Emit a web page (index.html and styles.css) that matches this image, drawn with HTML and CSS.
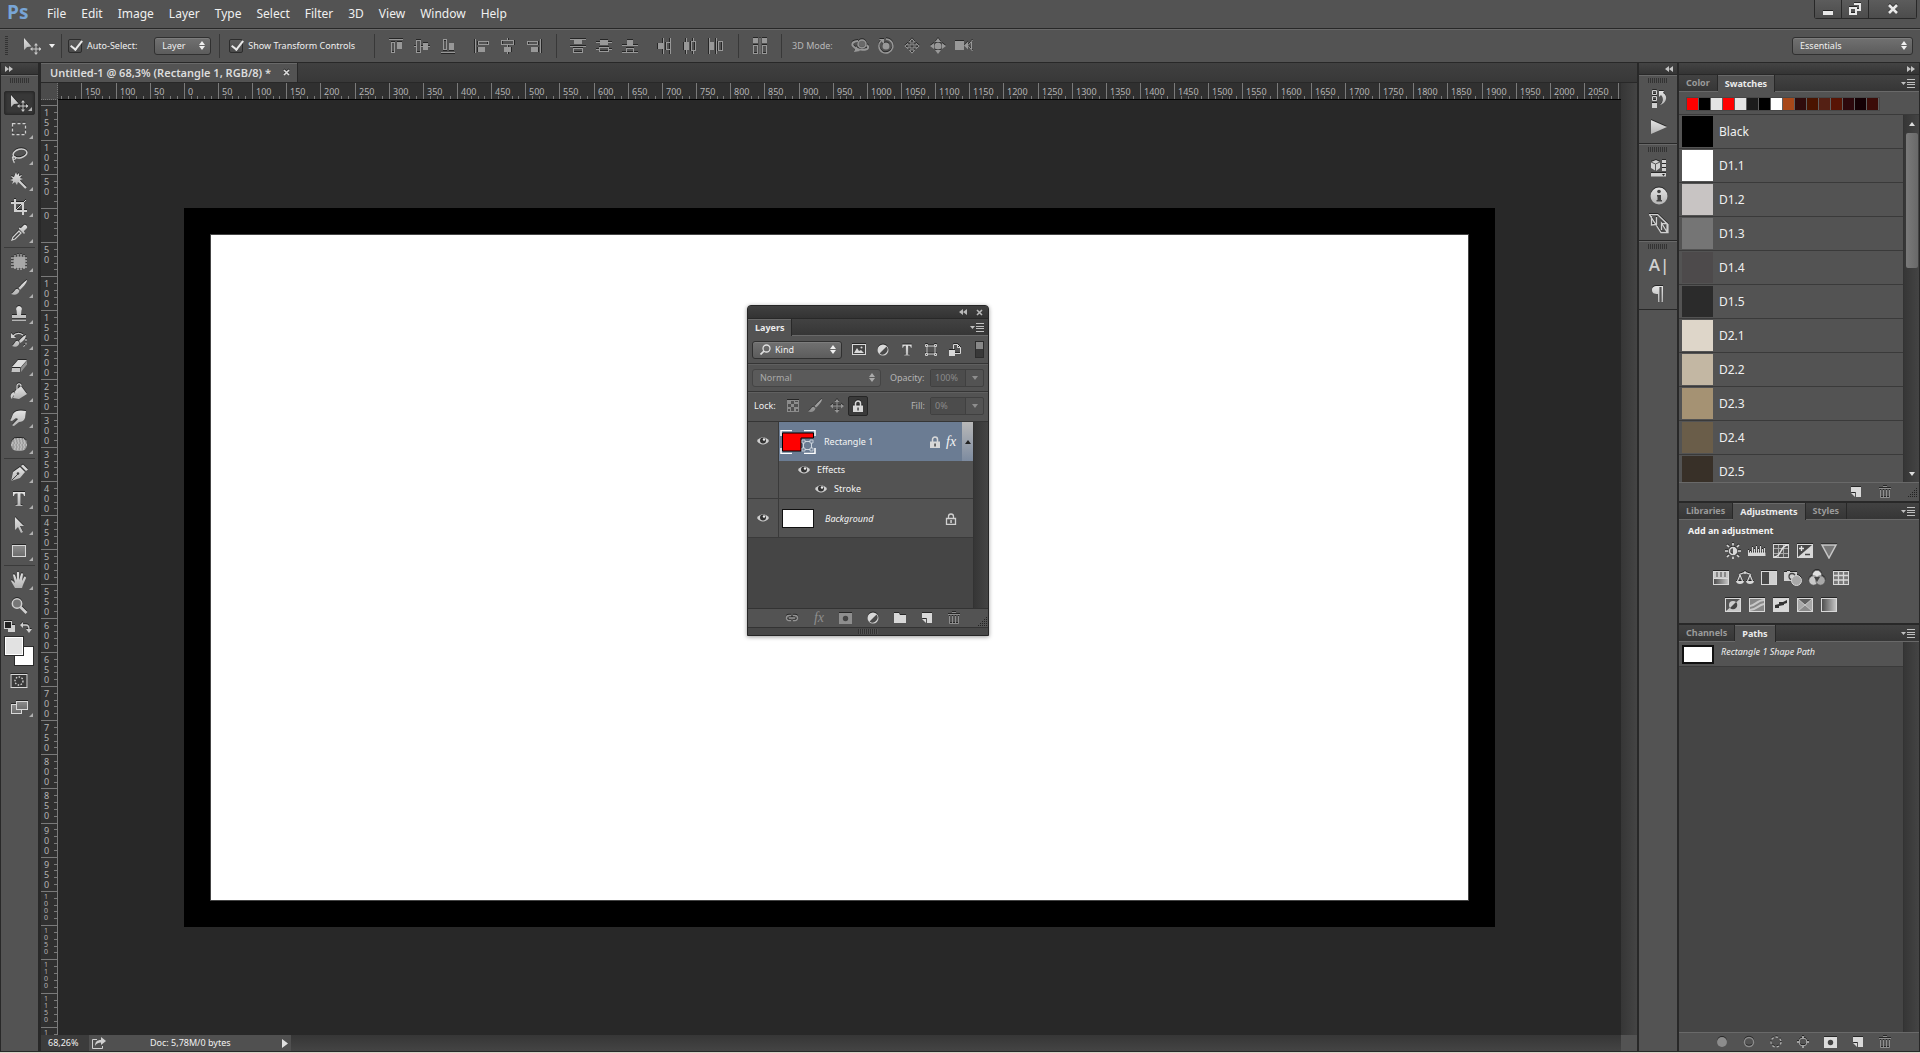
FILE: index.html
```html
<!DOCTYPE html>
<html lang="en">
<head>
<meta charset="utf-8">
<title>Untitled-1 @ 68,3% (Rectangle 1, RGB/8) *</title>
<link rel="stylesheet" href="styles.css">
</head>
<body>
<svg class="sprite" aria-hidden="true">
  <defs>
    <linearGradient id="g" x1="0" y1="0" x2="0" y2="1"><stop offset="0" stop-color="#e4e4e4"/><stop offset="1" stop-color="#b4b4b4"/></linearGradient>
    <linearGradient id="gd" x1="0" y1="0" x2="1" y2="0"><stop offset="0" stop-color="#4a4a4a"/><stop offset="1" stop-color="#c8c8c8"/></linearGradient>
    <linearGradient id="gm" x1="0" y1="0" x2="0" y2="1"><stop offset="0" stop-color="#8c8c8c"/><stop offset="1" stop-color="#6c6c6c"/></linearGradient>
    <symbol id="updown" viewBox="0 0 6 9"><path d="M3 0l3 4H0zM3 9l3-4H0z" fill="currentColor"/></symbol>
    <symbol id="caret" viewBox="0 0 6 4"><path d="M0 0h6L3 4z" fill="currentColor"/></symbol>
    <symbol id="cross" viewBox="0 0 7 7"><path d="M1 1l5 5M6 1L1 6" stroke="currentColor" stroke-width="1.600"/></symbol>
    <symbol id="dbl" viewBox="0 0 8 6"><path d="M0 0l4 3-4 3zM4 0l4 3-4 3z" fill="currentColor"/></symbol>
    <symbol id="flyout" viewBox="0 0 14 9"><path d="M0 3h5L2.500 6z" fill="currentColor"/><path d="M6 .5h8M6 3.500h8M6 5.500h8M6 8.500h8" stroke="currentColor"/></symbol>
    <symbol id="move" viewBox="0 0 18 18"><path d="M1 1v12l3-3 4.500-.5z" fill="url(#g)"/><path d="M13 7v10M8 12h10" stroke="#c8c8c8"/><path d="M13 6l2 2.500h-4zM13 18l2-2.500h-4zM7 12l2.500-2v4zM18.500 12L16 10v4z" fill="#c8c8c8"/></symbol>
    <symbol id="marquee" viewBox="0 0 18 18"><rect x="2.500" y="3.500" width="13" height="11" fill="none" stroke="#d0d0d0" stroke-width="1.300" stroke-dasharray="3 2"/></symbol>
    <symbol id="lasso" viewBox="0 0 18 18"><ellipse cx="10" cy="7.500" rx="7" ry="4.300" transform="rotate(-14 10 7.500)" fill="none" stroke="#d0d0d0" stroke-width="1.500"/><path d="M4 10c-3 1-1 4 1 3s-1-4-2-1 2 3 1 5" fill="none" stroke="#d0d0d0" stroke-width="1.200"/></symbol>
    <symbol id="wand" viewBox="0 0 18 18"><path d="M6 0l1 3 2-2 0 3 3-1-2 3 3 1-3 1 1 3-3-1-1 3-2-3-3 2 1-3-3-1 3-1-2-3 3 1z" fill="url(#g)"/><path d="M9 9l7 7" stroke="#d0d0d0" stroke-width="2.200"/></symbol>
    <symbol id="crop" viewBox="0 0 18 18"><path d="M5 1v12h12M1 5h12v12" fill="none" stroke="#d0d0d0" stroke-width="2"/><path d="M6 12L16 2" stroke="#d0d0d0"/></symbol>
    <symbol id="dropper" viewBox="0 0 18 18"><path d="M2 16l1-3 6-6 2 2-6 6z" fill="none" stroke="#d0d0d0" stroke-width="1.300"/><path d="M9 5l5 5 1-1-1-2 3-3c1-2-2-4-3-3l-3 3-2-.5z" fill="url(#g)"/></symbol>
    <symbol id="heal" viewBox="0 0 18 18"><path d="M5 2v14M8 1v16M11 1v16M14 2v14M1 5h16M1 8h16M1 11h16M1 14h16" stroke="#d8d8d8" stroke-width="1"/><rect x="3.500" y="3.500" width="12" height="11" rx="4" fill="#a8a8a8"/></symbol>
    <symbol id="brush" viewBox="0 0 18 18"><path d="M17 1c-1 0-7 6-8.500 8L10 11c2-2 7-7 7-10zM8 10c-3-1-3 3-7 5 4 2 8 0 8.500-3.500z" fill="url(#g)"/></symbol>
    <symbol id="stamp" viewBox="0 0 18 18"><path d="M9 1a3 3 0 0 1 2.500 4.500L11 10h5v3H2v-3h5l-.5-4.500A3 3 0 0 1 9 1zM2 14.500h14V16H2z" fill="url(#g)"/></symbol>
    <symbol id="hbrush" viewBox="0 0 18 18"><path d="M16 4c-1 0-6 4-7 6l1.500 2c3-2 5.500-5 5.500-8zM8 10c-3-1-3 3-6 5 4 2 7 0 7.500-3.500z" fill="url(#g)"/><path d="M3 5c3-3 7-3 10-1" fill="none" stroke="#d0d0d0" stroke-width="1.300"/><path d="M1 2v5h5z" fill="#d0d0d0"/><path d="M16 8v6l-4 2" fill="none" stroke="#d0d0d0" stroke-dasharray="2 1.500"/></symbol>
    <symbol id="eraser" viewBox="0 0 18 18"><path d="M8 3h9l-6 7H2z" fill="#dcdcdc"/><path d="M2 11h8v4H1.500z" fill="#c4c4c4"/><path d="M11 10.500l6-7v4l-6 7.500z" fill="#909090"/></symbol>
    <symbol id="bucket" viewBox="0 0 18 18"><path d="M5 8l6-5 6 8-8 5-6-1z" fill="url(#g)"/><path d="M7 10V3c0-3 4-3 4 0" fill="none" stroke="#d8d8d8" stroke-width="1.200"/><path d="M4 9c-4 1-4 5-2 7 1-3 1-4 3-4z" fill="#d0d0d0"/></symbol>
    <symbol id="smudge" viewBox="0 0 18 18"><path d="M3 5c2-4 8-4 13-3l-1 7c-1 3-4 4-6 4l-5 4c-2 0-2-1-1-2l5-5-2-1-4 3c-2 0-2-1-1-2z" fill="url(#g)"/></symbol>
    <symbol id="sponge" viewBox="0 0 18 18"><rect x="1" y="3" width="16" height="13" rx="6" fill="#9c9c9c"/><g fill="none" stroke="#dedede" stroke-dasharray="1.500 1.500"><path d="M4 4h10M2 8h14M1 10h16M4 14h10"/><path d="M3 6h14M3 12h13" stroke-dashoffset="1.500"/></g></symbol>
    <symbol id="pen" viewBox="0 0 18 18"><path d="M1 17l2-9 7-5 5 5-5 6z" fill="url(#g)"/><path d="M11 2l2-1.500 5 5L16 7z" fill="#d8d8d8"/><path d="M1.500 16.500L8 10" stroke="#444"/><circle cx="8" cy="9.500" r="1.300" fill="#444"/></symbol>
    <symbol id="type" viewBox="0 0 18 18"><path d="M3 2h12v4h-1c-.3-2-1-2.500-3.500-2.500V14c0 1 .5 1 2 1.200V16h-7v-.8c1.500-.2 2-.2 2-1.200V3.500C5 3.500 4.300 4 4 6H3z" fill="url(#g)"/></symbol>
    <symbol id="arrow" viewBox="0 0 18 18"><path d="M5 1v13l3-3 3 6 2-1-3-6h4z" fill="url(#g)"/></symbol>
    <symbol id="rect" viewBox="0 0 18 18"><rect x="2.500" y="3.500" width="13" height="11" fill="url(#gm)" stroke="#d8d8d8"/></symbol>
    <symbol id="hand" viewBox="0 0 18 18"><path d="M5 17L1 10c0-1 1-1 2 0l2 2-2-8c0-1 1.500-1 2 0l2 5V1.500c0-1 2-1 2 0V9l2-6c0-1 2-1 2 0l-1 7 2-4c1-1 2 0 2 1l-3 7-1 3z" fill="url(#g)"/></symbol>
    <symbol id="zoom" viewBox="0 0 18 18"><circle cx="7" cy="6.500" r="4.700" fill="#777" stroke="#d0d0d0" stroke-width="1.500"/><path d="M10.500 10l6 6" stroke="#d0d0d0" stroke-width="2.600"/></symbol>
    <symbol id="defaults" viewBox="0 0 11 11"><rect x="4" y="4" width="7" height="7" fill="#d0d0d0"/><rect x=".5" y=".5" width="7" height="7" fill="#222" stroke="#d0d0d0"/></symbol>
    <symbol id="swap" viewBox="0 0 12 12"><path d="M2 4h4c2 0 3 1 3 4" fill="none" stroke="#d0d0d0" stroke-width="1.300"/><path d="M0 4l3-3v6zM9 12L6 8h6z" fill="#d0d0d0"/></symbol>
    <symbol id="qmask" viewBox="0 0 18 14"><rect x="1" y=".5" width="16" height="13" fill="#3a3a3a" stroke="#d8d8d8"/><circle cx="9" cy="7" r="4" fill="none" stroke="#d8d8d8" stroke-width="1.300" stroke-dasharray="1.500 1.500"/></symbol>
    <symbol id="screens" viewBox="0 0 18 14"><rect x="1.500" y="4.500" width="10" height="9" fill="url(#gm)" stroke="#d8d8d8"/><rect x="6.500" y="1.500" width="11" height="8" fill="url(#gm)" stroke="#d8d8d8"/></symbol>

    <symbol id="al-top" viewBox="0 0 16 16"><path d="M1 1.500h14" stroke="currentColor"/><rect x="3.500" y="4.500" width="3" height="10" fill="none" stroke="currentColor"/><rect x="9" y="4" width="5" height="7" fill="currentColor"/></symbol>
    <symbol id="al-mid" viewBox="0 0 16 16"><path d="M0 8.500h2M7 8.500h2M14 8.500h2" stroke="currentColor"/><rect x="2.500" y="2.500" width="4" height="12" fill="none" stroke="currentColor"/><rect x="9" y="5" width="5" height="7" fill="currentColor"/></symbol>
    <symbol id="mode-align" viewBox="0 0 16 16"><rect x="1" y="0" width="5" height="5" fill="currentColor"/><rect x="10" y="0" width="5" height="5" fill="currentColor"/><rect x="1.500" y="7.500" width="4" height="8" fill="none" stroke="currentColor"/><rect x="10.500" y="7.500" width="4" height="8" fill="none" stroke="currentColor"/><path d="M8 0v16" stroke="currentColor"/></symbol>
    <symbol id="ds-top" viewBox="0 0 16 16"><path d="M0 1.500h16M0 8.500h16" stroke="currentColor"/><rect x="4" y="2" width="8" height="4" fill="currentColor"/><rect x="3.500" y="10.500" width="9" height="4" fill="none" stroke="currentColor"/></symbol>
    <symbol id="ds-mid" viewBox="0 0 16 16"><path d="M0 4.500h16M0 11.500h3M13 11.500h3" stroke="currentColor"/><rect x="4" y="2" width="8" height="5" fill="currentColor"/><rect x="3.500" y="9.500" width="9" height="4" fill="none" stroke="currentColor"/></symbol>
    <symbol id="ds-bot" viewBox="0 0 16 16"><path d="M0 7.500h16M0 14.500h16" stroke="currentColor"/><rect x="5" y="2" width="6" height="5" fill="currentColor"/><rect x="4.500" y="10.500" width="7" height="4" fill="none" stroke="currentColor"/></symbol>
    <symbol id="m-orbit" viewBox="0 0 18 16"><circle cx="11" cy="6" r="4" fill="currentColor" fill-opacity=".5" stroke="currentColor" stroke-width="1.500"/><path d="M7 3C3 3 0 5 2 8s9 5 14 3c2-1 1-3 0-4" fill="none" stroke="currentColor" stroke-width="2"/><path d="M3 14l6-1-4-5z" fill="currentColor"/></symbol>
    <symbol id="m-roll" viewBox="0 0 16 16"><circle cx="8" cy="8" r="3.500" fill="currentColor"/><path d="M3 3a7 7 0 1 0 5-2" fill="none" stroke="currentColor" stroke-width="1.500"/><path d="M1 1h5v5z" fill="currentColor"/></symbol>
    <symbol id="m-pan" viewBox="0 0 16 16"><path d="M8 .8l2.600 3H9v3.200h3.200V5.400l3 2.600-3 2.600V9H9v3.200h1.600L8 15.200l-2.600-3H7V9H3.800v1.600L.8 8l3-2.600V7H7V3.800H5.400z" fill="none" stroke="currentColor"/></symbol>
    <symbol id="m-slide" viewBox="0 0 16 16"><circle cx="8" cy="8" r="3.500" fill="currentColor"/><path d="M8 0l3 4H5zM8 16l3-4H5zM0 8l4-3v6zM16 8l-4-3v6z" fill="currentColor"/></symbol>
    <symbol id="m-cam" viewBox="0 0 18 16"><rect x="0" y="3" width="9" height="9" fill="currentColor"/><path d="M9 7.500l4-4v8z" fill="currentColor"/><path d="M17.500 2l-4.500 5.500 4.500 5.500M16.500 4v7" fill="none" stroke="currentColor"/></symbol>
    <symbol id="lockmove" viewBox="0 0 14 14"><path d="M7 1v12M1 7h12" stroke="#959595" stroke-width="1.200"/><path d="M7 0l2.500 3h-5zM7 14l2.500-3h-5zM0 7l3-2.500v5zM14 7l-3-2.500v5z" fill="#959595"/></symbol>

    <symbol id="history" viewBox="0 0 18 18"><path d="M2.500.5h4v4h-4zM2.500 6.500h4v4h-4z" fill="none" stroke="#d0d0d0"/><path d="M2 13h5v5H2z" fill="#d0d0d0"/><path d="M9 1h5l-1 2c5 2 4 10-3 12 3-3 4-7 1-10l-2 2z" fill="url(#g)"/></symbol>
    <symbol id="play" viewBox="0 0 18 18"><path d="M1 2l16 7L1 16z" fill="url(#g)"/></symbol>
    <symbol id="props" viewBox="0 0 18 18"><path d="M1 3l5-2 4 2v6l-4 3-5-3z" fill="#d0d0d0"/><path d="M1 3l4.500 2L10 3M5.500 5v7" stroke="#555" fill="none"/><path d="M12 1h4v3h-4zM12 5h4v3h-4zM12 9h4v3h-4zM1 14h15v3.500H1z" fill="#d0d0d0"/><path d="M12 15h3l-1.500 2z" fill="#222"/></symbol>
    <symbol id="info" viewBox="0 0 18 18"><circle cx="9" cy="9" r="8.500" fill="url(#g)"/><circle cx="9" cy="4.500" r="1.800" fill="#444"/><path d="M7 8h4v5h1v1.500H6.500V13h1V9.500H7z" fill="#444"/></symbol>
    <symbol id="clone" viewBox="0 0 20 20"><path d="M.5.500h8l10.500 10v8h-7zM2.500 2v9l5-.5V3M12.500 9.500h5.500v8M18 18L12.500 9v7" fill="none" stroke="#d0d0d0" stroke-width="1.300"/></symbol>
    <symbol id="para" viewBox="0 0 18 18"><path d="M13 2v16h-1.500V3h-2v15H8v-8c-4 0-6-1-6-4s2-4 5-4z" fill="url(#g)"/></symbol>

    <symbol id="new" viewBox="0 0 12 12"><path d="M1 1h10v10H6V6H1z" fill="#d8d8d8"/><path d="M1 7h4v4z" fill="#d8d8d8"/></symbol>
    <symbol id="trash" viewBox="0 0 12 12"><path d="M4 .5h4M0 2.500h12M1.500 4v7.500h9V4M4.500 4v7M7.500 4v7" fill="none" stroke="currentColor"/></symbol>
    <symbol id="resize" viewBox="0 0 9 9"><path d="M8 0v9M6 2v7M4 4v5M2 6v3M0 8v1" stroke="#222" stroke-dasharray="1 1" transform="translate(.5 0)"/></symbol>
    <symbol id="eye" viewBox="0 0 12 10"><path d="M0 5c3-5 9-5 12 0-3 4.500-9 4.500-12 0z" fill="#cfcfcf"/><circle cx="6" cy="4.500" r="3" fill="#333"/><circle cx="7" cy="3.500" r="1.200" fill="#eee"/></symbol>
    <symbol id="lock" viewBox="0 0 12 12"><path d="M3.500 6V3.500a2.500 2.500 0 0 1 5 0V6" fill="none" stroke="#d8d8d8" stroke-width="1.500"/><path d="M1 5.500h10V12H1z" fill="#d8d8d8"/><path d="M5.300 7.500h1.500v3H5.300z" fill="#444"/></symbol>
    <symbol id="lock-o" viewBox="0 0 12 12"><path d="M3.500 6V3.500a2.500 2.500 0 0 1 5 0V6M1.500 5.500h9v6h-9z" fill="none" stroke="#d0d0d0" stroke-width="1.300"/><path d="M5.300 7h1.500v3H5.300z" fill="#d0d0d0"/></symbol>
    <symbol id="pic" viewBox="0 0 14 12"><rect x=".5" y=".5" width="13" height="10" fill="#444" stroke="#d8d8d8"/><path d="M2 9l3-5 2 3 2-1 3 3z" fill="#d8d8d8"/><circle cx="9.500" cy="3.500" r="1" fill="#d8d8d8"/></symbol>
    <symbol id="half" viewBox="0 0 12 12"><circle cx="6" cy="6" r="5.500" fill="#d8d8d8"/><path d="M9.500 2.500L2.500 9.500A5 5 0 0 0 9.500 2.500z" fill="#4a4a4a"/></symbol>
    <symbol id="shape" viewBox="0 0 12 12"><path d="M2 2h8v8H2z" fill="none" stroke="#d0d0d0"/><path d="M.5.500h2v2h-2zM9.500.500h2v2h-2zM.5 9.500h2v2h-2zM9.500 9.500h2v2h-2z" fill="#555" stroke="#d0d0d0"/></symbol>
    <symbol id="smart" viewBox="0 0 12 12"><path d="M4.500 5V.500h4l3 3V9.500H6M8.500.500v3h3" fill="none" stroke="#d8d8d8"/><path d="M0 6h6v6H0z" fill="#d8d8d8"/></symbol>
    <symbol id="search" viewBox="0 0 11 11"><circle cx="6.500" cy="4.500" r="3.500" fill="none" stroke="#e0e0e0" stroke-width="1.300"/><path d="M4 7l-3.500 3.500" stroke="#e0e0e0" stroke-width="1.700"/></symbol>
    <symbol id="checker" viewBox="0 0 12 12"><path d="M0 0h12v12H0z" fill="#8c8c8c"/><path d="M4 1h3v3H4zM1 4h3v3H1zM7 4h4v3H7zM4 7h3v4H4zM8 1h3v1H8zM1 9h2v2H1zM9 9h2v2H9z" fill="#505050"/></symbol>
    <symbol id="link" viewBox="0 0 14 8"><path d="M6 1.500H4a2.500 2.500 0 0 0 0 5h2M8 1.500h2a2.500 2.500 0 0 1 0 5H8M4 4h6" fill="none" stroke="#939393" stroke-width="1.400"/></symbol>
    <symbol id="mask" viewBox="0 0 13 11"><path d="M0 0h13v11H0z" fill="currentColor"/><circle cx="6.500" cy="5.500" r="2.700" fill="#444"/></symbol>
    <symbol id="folder" viewBox="0 0 12 10"><path d="M0 0h5l1 2h6v8H0z" fill="#d8d8d8"/></symbol>
    <symbol id="share" viewBox="0 0 14 12"><path d="M5 2.500H.500v9h10V9" fill="none" stroke="#d0d0d0"/><path d="M3 9c0-4 2-6 6-6V0l5 4-5 4V5.500C6 5.500 4 7 3 9z" fill="#d0d0d0"/></symbol>

    <symbol id="a-bright" viewBox="0 0 18 16"><circle cx="9" cy="8" r="3.500" fill="none" stroke="#d8d8d8" stroke-width="1.500"/><path d="M9 4.500a3.500 3.500 0 0 1 0 7z" fill="#d8d8d8"/><path d="M9 0v2.500M9 13.500V16M1 8h3M14 8h3M3 2l2 2M15 2l-2 2M3 14l2-2M15 14l-2-2" stroke="#d8d8d8" stroke-width="1.700"/></symbol>
    <symbol id="a-levels" viewBox="0 0 18 16"><path d="M.5 7v6M2.500 8v5M4.500 4v9M6.500 6v7M8.500 3v10M10.500 6v7M12.500 3v10M14.500 6v7M16.500 5v8" stroke="#d8d8d8"/><path d="M0 9.500h17.500v3.500H0z" fill="#d8d8d8"/></symbol>
    <symbol id="a-curves" viewBox="0 0 18 16"><rect x="1.500" y="1.500" width="15" height="13" fill="#555" stroke="#d8d8d8"/><path d="M6.500 2v12M11.500 2v12M2 5.500h14M2 10.500h14" stroke="#a8a8a8"/><path d="M2 14c8 0 6-12 14-12" stroke="#e4e4e4" stroke-width="1.500" fill="none"/></symbol>
    <symbol id="a-exp" viewBox="0 0 18 16"><rect x="1.500" y="1.500" width="15" height="13" fill="#484848" stroke="#d8d8d8"/><path d="M2 14L16 2v12z" fill="#d8d8d8"/><path d="M3 5.500h5M5.500 3v5" stroke="#e4e4e4" stroke-width="1.300"/><path d="M9 11.500h5" stroke="#444" stroke-width="1.500"/></symbol>
    <symbol id="a-vib" viewBox="0 0 18 16"><path d="M2 2h14L9 15z" fill="#777" stroke="#c8c8c8" stroke-width="1.500"/></symbol>
    <symbol id="a-hue" viewBox="0 0 18 16"><rect x="1.500" y="1.500" width="15" height="13" fill="url(#gd)" stroke="#d8d8d8"/><path d="M2 2h14v6H2z" fill="#c8c8c8"/><path d="M5 2v5M9 2v5M13 2v5" stroke="#888" stroke-width="2"/><path d="M2 8.500h14" stroke="#d8d8d8"/></symbol>
    <symbol id="a-bal" viewBox="0 0 18 16"><path d="M9 1v3M3 4.500l6-2 6 2M4 5l-2.500 6M4 5l2.500 6M14 5l-2.500 6M14 5l2.500 6" fill="none" stroke="#d8d8d8" stroke-width="1.200"/><path d="M0 11h8c0 4-8 4-8 0zM10 11h8c0 4-8 4-8 0z" fill="#d8d8d8"/></symbol>
    <symbol id="a-bw" viewBox="0 0 18 16"><rect x="1.500" y="1.500" width="15" height="13" fill="#d0d0d0" stroke="#d8d8d8"/><path d="M2 2h7v12H2z" fill="#484848"/></symbol>
    <symbol id="a-photo" viewBox="0 0 18 16"><path d="M0 2h3V1h3v1h7v9H0z" fill="#d0d0d0"/><circle cx="8" cy="6.500" r="3" fill="#d0d0d0" stroke="#444" stroke-width="1.300"/><circle cx="12.500" cy="10.500" r="5" fill="#a8a8a8" stroke="#d8d8d8"/></symbol>
    <symbol id="a-mix" viewBox="0 0 18 16"><g stroke="#555" stroke-width=".7"><circle cx="9" cy="5" r="4.700" fill="#e0e0e0"/><circle cx="5.500" cy="10.500" r="4.700" fill="#c8c8c8"/><circle cx="12.500" cy="10.500" r="4.700" fill="#a8a8a8"/></g><path d="M6 7h6l-3 5z" fill="#444"/></symbol>
    <symbol id="a-lut" viewBox="0 0 18 16"><rect x="1.500" y="1.500" width="15" height="13" fill="#777" stroke="#d8d8d8"/><path d="M6.500 2v12M11.500 2v12M2 5.500h14M2 10h14" stroke="#d8d8d8" stroke-width="1.300"/></symbol>
    <symbol id="a-inv" viewBox="0 0 18 16"><rect x="1.500" y="1.500" width="15" height="13" fill="#c8c8c8" stroke="#d8d8d8"/><path d="M2 14L16 2H2z" fill="#555"/><circle cx="9" cy="8" r="4" fill="#ccc"/><path d="M12 5L6 11a4 4 0 0 0 6-6z" fill="#444"/></symbol>
    <symbol id="a-post" viewBox="0 0 18 16"><rect x="1.500" y="1.500" width="15" height="13" fill="#888" stroke="#d8d8d8"/><path d="M2 9c5 0 7-6 14-6M2 13c6 0 8-5 14-6" stroke="#c8c8c8" stroke-width="2" fill="none"/></symbol>
    <symbol id="a-thr" viewBox="0 0 18 16"><rect x="1.500" y="1.500" width="15" height="13" fill="#d8d8d8" stroke="#d8d8d8"/><path d="M3 8l4-1V5h4l4-2v3l-3 1v1l-5 1v2H3z" fill="#333"/></symbol>
    <symbol id="a-sel" viewBox="0 0 18 16"><rect x="1.500" y="1.500" width="15" height="13" fill="#606060" stroke="#d8d8d8"/><path d="M2 2l7 6-7 6zM16 2L9 8l7 6z" fill="#a8a8a8"/><path d="M2 14l7-6 7 6z" fill="#8a8a8a"/><path d="M2 2l14 12M16 2L2 14" stroke="#c8c8c8"/></symbol>
    <symbol id="a-map" viewBox="0 0 18 16"><rect x="1.500" y="1.500" width="15" height="13" fill="url(#gd)" stroke="#d8d8d8"/></symbol>
  </defs>
</svg>

<header class="menubar">
  <div class="logo">Ps</div>
  <nav class="menus">
    <a href="#">File</a><a href="#">Edit</a><a href="#">Image</a><a href="#">Layer</a><a href="#">Type</a><a href="#">Select</a><a href="#">Filter</a><a href="#">3D</a><a href="#">View</a><a href="#">Window</a><a href="#">Help</a>
  </nav>
  <div class="winbtns">
    <button aria-label="Minimize"><svg width="12" height="12"><path d="M1 8h10v4H1z" fill="#e8e8e8"/></svg></button>
    <button aria-label="Restore"><svg width="12" height="12"><path d="M5 1h6v6H8M1 5h6v6H1z" fill="none" stroke="#e8e8e8" stroke-width="2"/></svg></button>
    <button class="wide" aria-label="Close"><svg width="12" height="12"><path d="M2 2l8 8M10 2l-8 8" stroke="#e8e8e8" stroke-width="2.600"/></svg></button>
  </div>
</header>

<div class="options">
  <span class="vgrip"></span>
  <span class="current"><svg width="18" height="18"><use href="#move"/></svg><svg width="6" height="4"><use href="#caret"/></svg></span>
  <span class="vsep"></span>
  <label class="check auto-select"><input type="checkbox" checked><span>Auto-Select:</span></label>
  <span class="combo mode"><select aria-label="Auto-select target"><option>Layer</option></select><svg width="6" height="9"><use href="#updown"/></svg></span>
  <span class="vsep"></span>
  <label class="check transform"><input type="checkbox" checked><span>Show Transform Controls</span></label>
  <span class="vsep"></span>
  <div class="icons align">
    <button aria-label="Align top edges"><svg><use href="#al-top"/></svg></button>
    <button aria-label="Align vertical centers"><svg><use href="#al-mid"/></svg></button>
    <button aria-label="Align bottom edges"><svg class="flip"><use href="#al-top"/></svg></button>
  </div>
  <div class="icons align last">
    <button aria-label="Align left edges"><svg class="turn"><use href="#al-top"/></svg></button>
    <button aria-label="Align horizontal centers"><svg class="turnback"><use href="#al-mid"/></svg></button>
    <button aria-label="Align right edges"><svg class="turnback"><use href="#al-top"/></svg></button>
  </div>
  <span class="vsep"></span>
  <div class="icons align">
    <button aria-label="Distribute top edges"><svg><use href="#ds-top"/></svg></button>
    <button aria-label="Distribute vertical centers"><svg><use href="#ds-mid"/></svg></button>
    <button aria-label="Distribute bottom edges"><svg><use href="#ds-bot"/></svg></button>
  </div>
  <div class="icons align last">
    <button aria-label="Distribute left edges"><svg class="turn"><use href="#ds-bot"/></svg></button>
    <button aria-label="Distribute horizontal centers"><svg class="turn"><use href="#ds-mid"/></svg></button>
    <button aria-label="Distribute right edges"><svg class="turn"><use href="#ds-top"/></svg></button>
  </div>
  <span class="vsep"></span>
  <div class="icons auto"><button aria-label="Auto-align layers"><svg><use href="#mode-align"/></svg></button></div>
  <span class="vsep"></span>
  <span class="mode3d">3D Mode:</span>
  <div class="icons">
    <button aria-label="Orbit"><svg class="big"><use href="#m-orbit"/></svg></button>
    <button aria-label="Roll"><svg><use href="#m-roll"/></svg></button>
    <button aria-label="Pan"><svg><use href="#m-pan"/></svg></button>
    <button aria-label="Slide"><svg class="big"><use href="#m-slide"/></svg></button>
    <button aria-label="Camera"><svg class="big"><use href="#m-cam"/></svg></button>
  </div>
  <span class="combo essentials"><select aria-label="Workspace"><option>Essentials</option></select><svg width="6" height="9"><use href="#updown"/></svg></span>
</div>

<main class="work">
  <aside class="tools">
    <div class="strip start"><svg width="8" height="6"><use href="#dbl"/></svg></div>
    <div class="toolbox">
      <span class="grip"></span>
      <div class="toolset">
        <button class="tool on" aria-label="Move"><svg><use href="#move"/></svg></button>
        <button class="tool" aria-label="Marquee"><svg><use href="#marquee"/></svg></button>
        <button class="tool" aria-label="Lasso"><svg><use href="#lasso"/></svg></button>
        <button class="tool" aria-label="Magic wand"><svg><use href="#wand"/></svg></button>
        <button class="tool" aria-label="Crop"><svg><use href="#crop"/></svg></button>
        <button class="tool" aria-label="Eyedropper"><svg><use href="#dropper"/></svg></button>
      </div>
      <div class="toolset">
        <button class="tool" aria-label="Healing brush"><svg><use href="#heal"/></svg></button>
        <button class="tool" aria-label="Brush"><svg><use href="#brush"/></svg></button>
        <button class="tool" aria-label="Stamp"><svg><use href="#stamp"/></svg></button>
        <button class="tool" aria-label="History brush"><svg><use href="#hbrush"/></svg></button>
        <button class="tool" aria-label="Eraser"><svg><use href="#eraser"/></svg></button>
        <button class="tool" aria-label="Paint bucket"><svg><use href="#bucket"/></svg></button>
        <button class="tool" aria-label="Smudge"><svg><use href="#smudge"/></svg></button>
        <button class="tool" aria-label="Sponge"><svg><use href="#sponge"/></svg></button>
      </div>
      <div class="toolset">
        <button class="tool" aria-label="Pen"><svg><use href="#pen"/></svg></button>
        <button class="tool" aria-label="Type"><svg><use href="#type"/></svg></button>
        <button class="tool" aria-label="Path selection"><svg><use href="#arrow"/></svg></button>
        <button class="tool" aria-label="Rectangle"><svg><use href="#rect"/></svg></button>
      </div>
      <div class="toolset final">
        <button class="tool" aria-label="Hand"><svg><use href="#hand"/></svg></button>
        <button class="tool plain" aria-label="Zoom"><svg><use href="#zoom"/></svg></button>
      </div>
      <div class="swapper">
        <button aria-label="Default colors"><svg width="11" height="11"><use href="#defaults"/></svg></button>
        <button aria-label="Switch colors"><svg width="12" height="12"><use href="#swap"/></svg></button>
      </div>
      <div class="colors"><button class="bg" aria-label="Background color"></button><button class="fg" aria-label="Foreground color"></button></div>
      <button class="tool plain" aria-label="Quick mask"><svg><use href="#qmask"/></svg></button>
      <button class="tool" aria-label="Screen mode"><svg><use href="#screens"/></svg></button>
    </div>
  </aside>

  <section class="document">
    <div class="doctabs"><div class="doctab">Untitled-1 @ 68,3% (Rectangle 1, RGB/8) *<button aria-label="Close document"><svg width="7" height="7"><use href="#cross"/></svg></button></div></div>
    <div class="docgrid">
      <div class="corner"></div>
      <svg class="ruler top" id="rulerTop"></svg>
      <div class="vscroll"></div>
      <svg class="ruler side" id="rulerSide"></svg>
      <div class="canvas"><div class="art" id="art"><div class="shape"></div></div></div>
    </div>
    <footer class="status">
      <span class="pct">68,26%</span>
      <div class="docinfo"><svg width="14" height="12"><use href="#share"/></svg><span class="size">Doc: 5,78M/0 bytes</span><svg width="6" height="9"><path d="M0 0l6 4.500L0 9z" fill="#e0e0e0"/></svg></div>
      <div class="hscroll"></div><div class="sizebox"></div>
    </footer>
  </section>

  <aside class="dock">
    <div class="strip end"><svg class="left" width="8" height="6"><use href="#dbl"/></svg></div>
    <div class="dockset"><span class="grip"></span>
      <button aria-label="History"><svg><use href="#history"/></svg></button>
      <button aria-label="Actions"><svg><use href="#play"/></svg></button></div>
    <div class="dockset"><span class="grip"></span>
      <button aria-label="Properties"><svg><use href="#props"/></svg></button>
      <button aria-label="Info"><svg><use href="#info"/></svg></button>
      <button aria-label="Clone source"><svg class="clone"><use href="#clone"/></svg></button></div>
    <div class="dockset"><span class="grip"></span>
      <button class="char" aria-label="Character">A|</button>
      <button aria-label="Paragraph"><svg><use href="#para"/></svg></button></div>
    <div class="dockfill"></div>
  </aside>

  <aside class="panels">
    <div class="strip end"><svg width="8" height="6"><use href="#dbl"/></svg></div>
    <section class="panel">
      <div class="tabs"><button>Color</button><button class="on">Swatches</button><svg class="fly" width="14" height="9"><use href="#flyout"/></svg></div>
      <div class="recent"><div class="chips" id="chips"></div></div>
      <div class="listwrap">
        <ul class="swatches">
          <li><i style="background:#000000"></i>Black</li>
          <li><i style="background:#ffffff"></i>D1.1</li>
          <li><i style="background:#c8c4c3"></i>D1.2</li>
          <li><i style="background:#757575"></i>D1.3</li>
          <li><i style="background:#4d4a4b"></i>D1.4</li>
          <li><i style="background:#2b2b2b"></i>D1.5</li>
          <li><i style="background:#ded6c9"></i>D2.1</li>
          <li><i style="background:#c3b7a3"></i>D2.2</li>
          <li><i style="background:#a59273"></i>D2.3</li>
          <li><i style="background:#6a5d49"></i>D2.4</li>
          <li><i style="background:#383028"></i>D2.5</li>
        </ul>
        <div class="bar"><svg width="6" height="4" class="up"><use href="#caret"/></svg><span class="thumb"></span><svg width="6" height="4"><use href="#caret"/></svg></div>
      </div>
      <div class="foot swatchfoot"><button aria-label="New swatch"><svg width="12" height="12"><use href="#new"/></svg></button><button aria-label="Delete swatch"><svg width="12" height="12"><use href="#trash"/></svg></button><svg width="9" height="9"><use href="#resize"/></svg></div>
    </section>
    <section class="panel">
      <div class="tabs"><button>Libraries</button><button class="on">Adjustments</button><button>Styles</button><svg class="fly" width="14" height="9"><use href="#flyout"/></svg></div>
      <div class="adjust">
        <h2>Add an adjustment</h2>
        <div class="adjrow">
          <button aria-label="Brightness"><svg><use href="#a-bright"/></svg></button><button aria-label="Levels"><svg><use href="#a-levels"/></svg></button><button aria-label="Curves"><svg><use href="#a-curves"/></svg></button><button aria-label="Exposure"><svg><use href="#a-exp"/></svg></button><button aria-label="Vibrance"><svg><use href="#a-vib"/></svg></button>
        </div>
        <div class="adjrow">
          <button aria-label="Hue"><svg><use href="#a-hue"/></svg></button><button aria-label="Color balance"><svg><use href="#a-bal"/></svg></button><button aria-label="Black and white"><svg><use href="#a-bw"/></svg></button><button aria-label="Photo filter"><svg><use href="#a-photo"/></svg></button><button aria-label="Channel mixer"><svg><use href="#a-mix"/></svg></button><button aria-label="Color lookup"><svg><use href="#a-lut"/></svg></button>
        </div>
        <div class="adjrow">
          <button aria-label="Invert"><svg><use href="#a-inv"/></svg></button><button aria-label="Posterize"><svg><use href="#a-post"/></svg></button><button aria-label="Threshold"><svg><use href="#a-thr"/></svg></button><button aria-label="Selective color"><svg><use href="#a-sel"/></svg></button><button aria-label="Gradient map"><svg><use href="#a-map"/></svg></button>
        </div>
      </div>
    </section>
    <section class="panel grow">
      <div class="tabs"><button>Channels</button><button class="on">Paths</button><svg class="fly" width="14" height="9"><use href="#flyout"/></svg></div>
      <div class="listwrap paths"><div class="pathlist"><div class="pathrow"><i></i>Rectangle 1 Shape Path</div></div><div class="bar"></div></div>
      <div class="foot pathfoot">
        <button aria-label="Fill path"><svg width="12" height="12"><circle cx="6" cy="6" r="5" fill="#8c8c8c"/></svg></button>
        <button aria-label="Stroke path"><svg width="12" height="12"><circle cx="6" cy="6" r="4.500" fill="none" stroke="#8c8c8c" stroke-width="1.500"/></svg></button>
        <button aria-label="Load as selection"><svg width="12" height="12"><circle cx="6" cy="6" r="5" fill="none" stroke="#b0b0b0" stroke-width="1.300" stroke-dasharray="2.500 2"/></svg></button>
        <button aria-label="Make work path"><svg width="12" height="12"><circle cx="6" cy="6" r="4" fill="none" stroke="#a0a0a0"/><path d="M5 0h2v3H5zM5 9h2v3H5zM0 5h3v2H0zM9 5h3v2H9z" fill="#a0a0a0"/></svg></button>
        <button class="lit" aria-label="Add mask"><svg width="13" height="11"><use href="#mask"/></svg></button>
        <button aria-label="New path"><svg width="12" height="12"><use href="#new"/></svg></button>
        <button aria-label="Delete path"><svg width="12" height="12"><use href="#trash"/></svg></button>
      </div>
    </section>
  </aside>
</main>

<section class="layers" aria-label="Layers">
  <div class="ltitle"><svg class="left" width="8" height="6"><use href="#dbl"/></svg><svg width="7" height="7"><use href="#cross"/></svg></div>
  <div class="tabs"><button class="on">Layers</button><svg class="fly" width="14" height="9"><use href="#flyout"/></svg></div>
  <div class="lrow filter">
    <span class="combo kind"><svg class="lead" width="11" height="11"><use href="#search"/></svg><select aria-label="Filter type"><option>Kind</option></select><svg width="6" height="9"><use href="#updown"/></svg></span>
    <button aria-label="Pixel layers"><svg width="14" height="12"><use href="#pic"/></svg></button>
    <button aria-label="Adjustment layers"><svg width="12" height="12"><use href="#half"/></svg></button>
    <button aria-label="Type layers"><svg width="14" height="14"><use href="#type"/></svg></button>
    <button aria-label="Shape layers"><svg width="12" height="12"><use href="#shape"/></svg></button>
    <button aria-label="Smart objects"><svg width="12" height="12"><use href="#smart"/></svg></button>
    <button class="switch" aria-label="Filter toggle"></button>
  </div>
  <div class="lrow dim">
    <span class="combo blend"><select aria-label="Blend mode" disabled><option>Normal</option></select><svg width="6" height="9"><use href="#updown"/></svg></span>
    <label for="opacity">Opacity:</label><span class="field"><input id="opacity" value="100%" disabled><svg width="6" height="4"><use href="#caret"/></svg></span>
  </div>
  <div class="lrow locks">
    <span class="locklabel">Lock:</span>
    <button aria-label="Lock transparency"><svg width="12" height="12"><use href="#checker"/></svg></button>
    <button class="faded" aria-label="Lock pixels"><svg width="16" height="16"><use href="#brush"/></svg></button>
    <button aria-label="Lock position"><svg width="14" height="14"><use href="#lockmove"/></svg></button>
    <button class="all" aria-label="Lock all"><svg width="12" height="12"><use href="#lock"/></svg></button>
    <label for="fill">Fill:</label><span class="field"><input id="fill" value="0%" disabled><svg width="6" height="4"><use href="#caret"/></svg></span>
  </div>
  <div class="lbody">
    <div class="llist">
      <div class="layer sel"><span class="vis"><svg width="12" height="10"><use href="#eye"/></svg></span>
        <div class="info">
          <svg class="thumbnail" width="36" height="24"><path d="M1 6V.500h11M24 .5h11V6M1 18v5.500h11M24 23.500h11V18" fill="none" stroke="#fff" stroke-width="1.500"/><path d="M2.500 3h31v5H21v13H2.500z" fill="#f00" stroke="#000"/><path d="M23.500 11.500h8v8h-8z" fill="none" stroke="#d0d8e0"/><path d="M22 10h3v3h-3zM30 10h3v3h-3zM22 18h3v3h-3zM30 18h3v3h-3z" fill="#6b7c93" stroke="#d0d8e0" stroke-width=".8"/></svg>
          <span class="name">Rectangle 1</span><svg width="12" height="12"><use href="#lock"/></svg><em class="fx">fx</em></div>
        <span class="expand"><svg class="up" width="6" height="4"><use href="#caret"/></svg></span></div>
      <div class="layer fxrows"><span class="vis"></span>
        <div class="effects"><div><svg width="12" height="10"><use href="#eye"/></svg>Effects</div><div class="sub"><svg width="12" height="10"><use href="#eye"/></svg>Stroke</div></div></div>
      <div class="layer"><span class="vis"><svg width="12" height="10"><use href="#eye"/></svg></span>
        <div class="info back"><i></i><span class="name"><em>Background</em></span><svg width="12" height="12"><use href="#lock-o"/></svg></div></div>
    </div>
    <div class="lbar"></div>
  </div>
  <div class="foot lfoot">
    <button aria-label="Link layers"><svg width="14" height="8"><use href="#link"/></svg></button>
    <button class="fx" aria-label="Layer style">fx</button>
    <button aria-label="Add mask"><svg width="13" height="11"><use href="#mask"/></svg></button>
    <button aria-label="Adjustment layer"><svg width="12" height="12"><use href="#half"/></svg></button>
    <button aria-label="New group"><svg width="12" height="10"><use href="#folder"/></svg></button>
    <button aria-label="New layer"><svg width="12" height="12"><use href="#new"/></svg></button>
    <button aria-label="Delete layer"><svg width="12" height="12"><use href="#trash"/></svg></button>
    <svg class="corner-grip" width="9" height="9"><use href="#resize"/></svg>
  </div>
  <div class="lgrip"><span class="grip"></span></div>
</section>
<script src="script.js"></script>
</body>
</html>
```
FILE: styles.css
```css
* { box-sizing: border-box; }
:root {
  --panel: #535353;
  --edge: #282828;
  --light: #696969;
  --ui: 9px;
}
html, body { height: 100%; }
body {
  margin: 0;
  display: flex;
  flex-direction: column;
  background: var(--edge);
  border-bottom: 1px solid #d8d4c8;
  color: #f0f0f0;
  font: var(--ui)/12px "Noto Sans", "Open Sans", sans-serif;
  overflow: hidden;
}
button {
  display: flex;
  align-items: center;
  justify-content: center;
  padding: 0;
  border: 0;
  background: none;
  color: inherit;
  font: inherit;
}
svg { display: block; flex: none; }
button svg { filter: drop-shadow(0 -1px 0 rgba(20, 20, 20, .7)); }
.sprite { position: absolute; width: 0; height: 0; }
.up { transform: scaleY(-1); }
.left { transform: scaleX(-1); }

/* menu bar */
.menubar { display: flex; flex: 0 0 28px; background: var(--panel); padding-right: 3px; }
.logo { width: 40px; padding-left: 7px; color: #78a5d6; font: bold 19px/25px "Open Sans", sans-serif; }
.menus { display: flex; flex: 1; font-size: 12px; line-height: 28px; }
.menus a { color: #f0f0f0; text-decoration: none; padding: 0 8px 0 7px; }
.winbtns { display: flex; height: 19px; border: 1px solid var(--edge); border-top: 0; border-radius: 0 0 3px 3px; }
.winbtns button { width: 27px; border-right: 1px solid var(--edge); background: linear-gradient(#5c5c5c, #4c4c4c); }
.winbtns .wide { width: 47px; border: 0; }

/* options bar */
.options {
  display: flex;
  align-items: center;
  flex: 0 0 35px;
  padding: 0 7px 0 5px;
  background: var(--panel);
  border-top: 1px solid var(--edge);
  border-bottom: 1px solid var(--edge);
  box-shadow: inset 0 1px var(--light);
}
.vgrip { width: 3px; height: 19px; background: repeating-linear-gradient(#333 0 1px, #535353 1px 2px); }
.current { display: flex; align-items: center; gap: 8px; margin: 0 6px 0 15px; }
.vsep { width: 1px; height: 24px; background: #383838; }
.check { display: flex; align-items: center; gap: 5px; }
.auto-select { margin: 0 17px 0 6px; }
.transform { margin: 0 19px 0 9px; }
.check input {
  appearance: none;
  width: 14px;
  height: 14px;
  margin: 0;
  border: 1px solid #2c2c2c;
  border-radius: 2px;
  background: linear-gradient(#5c5c5c, #4a4a4a);
}
.check input::after {
  content: "";
  display: block;
  width: 5px;
  height: 10px;
  margin: -2px 0 0 4px;
  border: solid #e8e8e8;
  border-width: 0 2px 2px 0;
  transform: rotate(38deg);
}
.combo {
  display: flex;
  align-items: center;
  height: 18px;
  padding: 0 5px 0 7px;
  border: 1px solid #303030;
  border-radius: 3px;
  background: linear-gradient(#717171, #5c5c5c);
  box-shadow: inset 0 1px #7d7d7d;
}
.combo select { appearance: none; flex: 1; min-width: 0; padding: 0; border: 0; background: none; color: inherit; font: inherit; opacity: 1; }
.combo.mode { width: 57px; margin-right: 8px; }
.combo.essentials { width: 121px; margin-left: auto; }
.icons { display: flex; color: #989898; }
.icons button { width: 26px; height: 22px; }
.icons svg { width: 16px; height: 16px; }
.icons .big { width: 18px; }
.align { padding-left: 8px; }
.align.last { padding-right: 9px; }
.auto { padding: 0 8px; }
.flip { transform: scaleY(-1); }
.turn { transform: rotate(-90deg) scaleX(-1); }
.turnback { transform: rotate(90deg); }
.mode3d { width: 65px; padding-left: 10px; color: #b8b8b8; }

/* work area */
.work { display: flex; flex: 1; min-height: 0; padding: 0 1px 1px; }
.strip { display: flex; align-items: center; height: 12px; padding: 0 4px; background: linear-gradient(#444, #343434); border-bottom: 1px solid var(--edge); color: #c4c4c4; }
.strip.end { justify-content: flex-end; }
.grip { width: 20px; height: 5px; background: repeating-linear-gradient(90deg, #333 0 1px, #535353 1px 2px); }

.tools { width: 37px; display: flex; flex-direction: column; }
.toolbox { display: flex; flex-direction: column; align-items: center; flex: 1; padding-top: 3px; background: var(--panel); box-shadow: inset 0 1px var(--light); }
.toolset { padding-bottom: 1px; margin-bottom: 1px; border-bottom: 1px solid #3a3a3a; }
.toolset.final { border: 0; margin: 0; padding: 0; }
.grip + .toolset { margin-top: 7px; }
.tool { position: relative; width: 31px; height: 26px; padding-right: 2px; }
.tool svg { width: 18px; height: 18px; }
.tool.on { background: #383838; border: 1px solid #2a2a2a; border-radius: 2px; box-shadow: inset 0 0 3px #222; height: 24px; margin: 1px 0; }
.tool::after { content: ""; position: absolute; right: 2px; bottom: 3px; border: 2px solid; border-color: transparent #b0b0b0 #b0b0b0 transparent; }
.tool.plain::after { display: none; }
.swapper { display: flex; align-items: center; justify-content: space-between; width: 32px; height: 15px; padding-right: 4px; }
.colors { position: relative; width: 31px; height: 34px; }
.colors button { position: absolute; width: 20px; height: 20px; border: 1px solid #2a2a2a; }
.colors .fg { left: 0; top: 2px; background: #e2e2e2; box-shadow: inset 0 0 0 1px #fff; }
.colors .bg { right: 1px; bottom: 2px; background: #fff; }

.document { display: flex; flex-direction: column; flex: 1; min-width: 0; margin: 0 2px 0 3px; }
.doctabs { display: flex; height: 20px; background: linear-gradient(#404040, #383838); border-bottom: 1px solid var(--edge); }
.doctab { display: flex; align-items: center; gap: 12px; padding: 0 7px 0 9px; background: var(--panel); border-right: 1px solid var(--edge); box-shadow: inset 0 1px var(--light); font-size: 11px; font-weight: 600; color: #dcdcdc; }
.docgrid { flex: 1; min-height: 0; display: grid; grid-template: 17px 1fr / 17px 1fr 16px; }
.corner { background: #4b4b4b; border-bottom: 1px dotted #777; border-right: 1px dotted #777; }
.ruler { width: 100%; height: 100%; background: #303030; fill: #b4b4b4; }
.ruler.top { border-bottom: 1px solid #000; }
.ruler path { stroke: #7a7a7a; fill: none; shape-rendering: crispEdges; }
.ruler .small { font-size: 7px; }
.vscroll { grid-column: 3; grid-row: 1 / 3; background: linear-gradient(90deg, #363636, #444); }
.ruler.side { grid-row: 2; grid-column: 1; }
.canvas { grid-row: 2; grid-column: 2; display: flex; align-items: center; justify-content: center; min-height: 0; overflow: hidden; background: #282828; }
.art { width: 83.9%; aspect-ratio: 1920 / 1053; padding: 26px; background: #000; }
.shape { height: 100%; background: #fff; border: 1px solid #444; }
.status { display: flex; height: 16px; background: #3c3c3c; line-height: 16px; }
.pct { width: 48px; padding-left: 7px; }
.docinfo { display: flex; align-items: center; width: 202px; padding: 0 3px; background: #505050; }
.size { flex: 1; padding-left: 44px; }
.hscroll { flex: 1; background: linear-gradient(#363636, #444); }
.sizebox { width: 16px; background: var(--panel); }

.dock { width: 38px; display: flex; flex-direction: column; margin-right: 2px; }
.dockset { display: flex; flex-direction: column; align-items: center; padding: 3px 0 2px; margin-bottom: 1px; background: var(--panel); box-shadow: inset 0 1px var(--light); }
.dock .grip { margin-bottom: 2px; }
.dockset button { width: 30px; height: 28px; padding-left: 2px; }
.dockset svg { width: 18px; height: 18px; }
.dockset .clone { width: 20px; height: 20px; }
.dockset .char { font: 600 17px/28px "Open Sans", sans-serif; color: #d0d0d0; }
.dockfill { flex: 1; background: var(--panel); }

/* panels */
.panels { width: 240px; display: flex; flex-direction: column; }
.panel { background: var(--panel); border-bottom: 2px solid var(--edge); }
.panel.grow { flex: 1; display: flex; flex-direction: column; border: 0; min-height: 0; }
.tabs { display: flex; height: 17px; background: linear-gradient(#424242, #363636); border-bottom: 1px solid var(--light); color: #9a9a9a; font-weight: 700; }
.tabs button { padding: 0 7px; border-right: 1px solid var(--edge); }
.tabs .on { background: var(--panel); box-shadow: inset 0 1px var(--light); color: #ececec; margin-bottom: -1px; }
.fly { margin: 4px 4px 0 auto; color: #c0c0c0; }
.recent { padding: 5px 7px 4px; height: 23px; border-bottom: 1px solid #3a3a3a; }
.chips { display: flex; width: 194px; border: 1px solid #474747; }
.chips i { width: 12px; height: 12px; border: 1px solid #606060; border-width: 0 1px 0 0; }
.listwrap { display: flex; }
.swatches { flex: 1; height: 367px; margin: 0; padding: 0; list-style: none; overflow: hidden; font-size: 12px; }
.swatches li { display: flex; align-items: center; gap: 6px; height: 34px; padding-left: 3px; border-bottom: 1px solid #3a3a3a; }
.swatches i { width: 31px; height: 31px; }
.bar { display: flex; flex-direction: column; align-items: center; justify-content: space-between; width: 16px; padding: 7px 0 6px; background: linear-gradient(90deg, #363636, #444); border-left: 1px solid #333; color: #ddd; }
.thumb { width: 12px; height: 135px; margin: 7px 0 auto; border-radius: 2px; background: linear-gradient(90deg, #7a7a7a, #696969); }
.foot { display: flex; align-items: center; height: 19px; background: var(--panel); border-top: 1px solid var(--light); color: #8e8e8e; }
.swatchfoot { justify-content: flex-end; gap: 17px; padding-right: 2px; }
.adjust { height: 103px; padding: 5px 9px 0; }
.adjust h2 { margin: 0 0 6px; font-size: inherit; line-height: 12px; color: #f4f4f4; }
.adjrow { display: flex; justify-content: center; gap: 6px; padding-right: 36px; margin-bottom: 11px; }
.adjrow svg { width: 18px; height: 16px; }
.paths { flex: 1; min-height: 0; }
.pathlist { flex: 1; background: #454545; }
.pathrow { display: flex; gap: 7px; height: 25px; padding: 3px 3px 2px; border-bottom: 1px solid #3a3a3a; background: var(--panel); font-style: italic; line-height: 14px; }
.pathrow i { width: 32px; height: 19px; border: 2px solid #111; background: #fff; }
.pathfoot { justify-content: flex-end; gap: 15px; padding-right: 28px; }
.lit { color: #dcdcdc; }

/* floating layers window */
.layers { position: absolute; left: 747px; top: 305px; width: 242px; border: 1px solid #262626; border-radius: 4px 4px 0 0; background: var(--panel); box-shadow: 0 1px 4px rgba(0, 0, 0, .4); overflow: hidden; }
.ltitle { display: flex; align-items: center; justify-content: flex-end; gap: 9px; height: 13px; padding-right: 5px; background: linear-gradient(#404040, #333); border-bottom: 1px solid var(--edge); color: #b8b8b8; }
.lrow { display: flex; align-items: center; padding: 0 4px; height: 28px; border-bottom: 1px solid #353535; box-shadow: inset 0 1px #606060; }
.filter { box-shadow: none; }
.filter button { width: 24px; height: 18px; }
.filter .switch { width: 9px; height: 17px; margin-left: 8px; border: 1px solid #2c2c2c; background: linear-gradient(#888 50%, #383838 50%); }
.combo.kind { width: 90px; margin-right: 5px; }
.kind .lead { margin-right: 4px; }
.combo.blend { width: 129px; margin-right: 9px; color: #ababab; background: #5a5a5a; border-color: #444; box-shadow: none; }
.lrow label { flex: 1; color: #b4b4b4; }
.field { display: flex; align-items: center; width: 54px; height: 18px; border: 1px solid #404040; border-radius: 2px; color: #8e8e8e; }
.field input { width: 35px; height: 16px; padding: 0 4px; border: 0; border-right: 1px solid #404040; background: #4c4c4c; color: #8a8a8a; font: inherit; }
.field svg { margin: 0 auto; }
.locks { padding-left: 6px; height: 30px; padding-bottom: 2px; }
.locklabel { width: 28px; }
.locks button { width: 22px; height: 20px; }
.locks .faded { opacity: .6; }
.locks .all { width: 20px; border: 1px solid #262626; border-radius: 2px; background: #3a3a3a; }
.locks label { text-align: right; padding-right: 5px; }
.lbody { display: flex; height: 186px; }
.llist { flex: 1; background: #454545; }
.layer { display: flex; height: 39px; background: var(--panel); border-bottom: 1px solid #3a3a3a; color: #f4f4f4; }
.layer.sel { border: 0; }
.vis { display: flex; align-items: center; justify-content: center; width: 31px; padding-bottom: 1px; border-right: 1px solid #3a3a3a; }
.info { display: flex; align-items: center; flex: 1; padding-left: 1px; }
.sel .info { background: #6b7c93; }
.name { flex: 1; padding: 1px 0 0 8px; }
.back .name { padding-left: 11px; }
.info .fx { width: 12px; margin: 0 4px 0 5px; }
.fx { font: italic 14px/14px "Liberation Serif", serif; }
.expand { display: flex; align-items: center; justify-content: center; width: 11px; background: linear-gradient(#b8b8b8, #7d8ba0); color: #222; }
.fxrows { height: 38px; }
.effects { padding: 0 0 0 19px; }
.effects div { display: flex; align-items: center; gap: 7px; height: 18px; }
.effects .sub { height: 19px; padding-left: 17px; }
.back { padding: 1px 16px 0 3px; }
.back i { width: 32px; height: 19px; border: 1px solid #111; background: #fff; }
.lbar { width: 15px; border-left: 1px solid #333; background: linear-gradient(90deg, #363636, #444); }
.lfoot { position: relative; justify-content: space-between; padding: 0 28px 0 37px; border-top-color: #333; }
.corner-grip { position: absolute; right: 1px; bottom: 1px; }
.lgrip { display: flex; justify-content: center; height: 8px; padding-top: 1px; background: #474747; border-top: 1px solid #333; }
```
FILE: script.js
```js
const NS = "http://www.w3.org/2000/svg";
const UNITS = 1920;

function text(svg, x, y, value, small) {
  const node = document.createElementNS(NS, "text");
  node.setAttribute("x", x);
  node.setAttribute("y", y);
  if (small) node.setAttribute("class", "small");
  node.textContent = value;
  svg.append(node);
}

function ticks(svg, d) {
  const path = document.createElementNS(NS, "path");
  path.setAttribute("d", d);
  svg.append(path);
}

function drawRulers() {
  const art = document.getElementById("art").getBoundingClientRect();
  const scale = art.width / UNITS;
  const top = document.getElementById("rulerTop");
  const side = document.getElementById("rulerSide");
  const t = top.getBoundingClientRect();
  const s = side.getBoundingClientRect();
  top.replaceChildren();
  side.replaceChildren();

  // Labels that would run past either end of a ruler are left out.
  let d = "";
  for (let v = -200; art.left + v * scale < t.right; v += 10) {
    const x = Math.round(art.left - t.left + v * scale);
    const major = v % 50 === 0;
    d += `M${x + 0.5} ${major ? 0 : 13}V16`;
    if (major && x > 0 && x + 26 < t.width) text(top, x + 4, 12, Math.abs(v));
  }
  ticks(top, d);

  d = "M16.500 0V" + s.height;
  for (let v = -200; art.top + v * scale < s.bottom; v += 10) {
    const y = Math.round(art.top - s.top + v * scale);
    const major = v % 50 === 0;
    d += `M${major ? 0 : 13} ${y + 0.5}H16`;
    if (major && y > 0) {
      const digits = String(Math.abs(v));
      const small = digits.length > 3;
      [...digits].forEach((c, i) => {
        const base = y + (small ? 8 + i * 7 : 11 + i * 10);
        if (base <= s.height) text(side, 3, base, c, small);
      });
    }
  }
  ticks(side, d);
}

const recent = ["#f00", "#000", "#e4e4e4", "#f00", "#e4e4e4", "#1c1c1c", "#000", "#fff",
  "#a8481a", "#300c0c", "#4a1400", "#542014", "#581404", "#2c080c", "#140004", "#3c0c08"];
for (const color of recent) {
  const chip = document.createElement("i");
  chip.style.background = color;
  document.getElementById("chips").append(chip);
}

drawRulers();
addEventListener("resize", drawRulers);
```
